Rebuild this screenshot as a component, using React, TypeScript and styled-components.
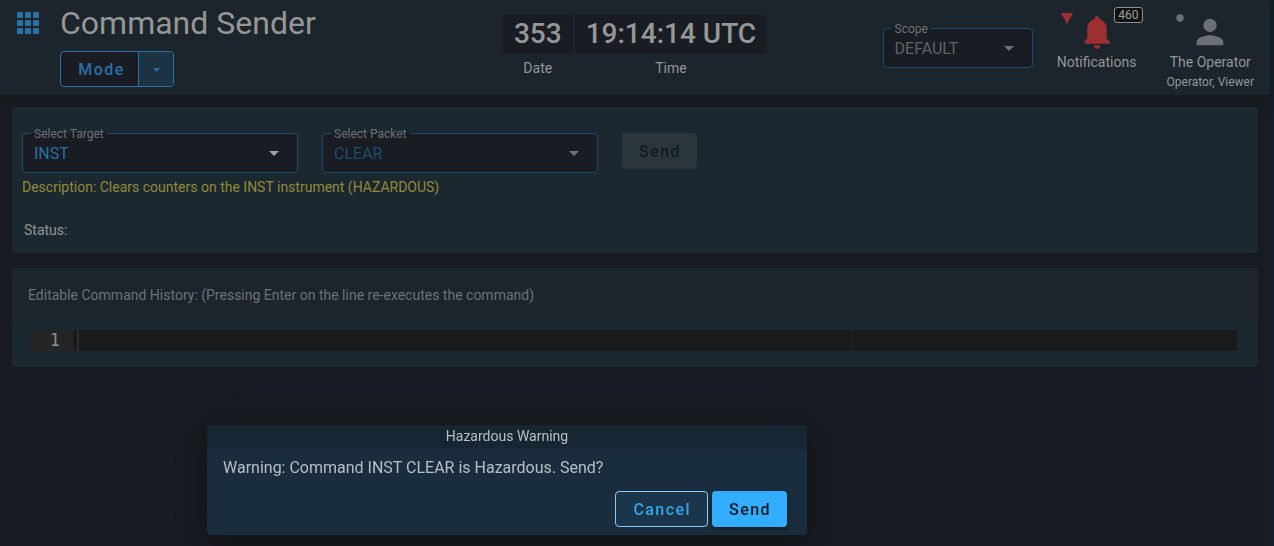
import React from 'react';
import styled, { createGlobalStyle, css } from 'styled-components';

const color = {
  page: '#191c24',
  bar: '#1b252b',
  card: '#1c2830',
  field: '#191c23',
  line: '#1d4b6e',
  accent: '#2a70a3',
  text: '#949698',
  muted: '#6c7277',
};

const GlobalStyle = createGlobalStyle`
  *, *::before, *::after { box-sizing: border-box; }
  body {
    margin: 0;
    background: ${color.page};
    color: ${color.text};
    font: 14px/20px Roboto, sans-serif;
  }
  button, select, input { font-family: inherit; }
`;

const Page = styled.div`
  min-height: 100vh;
  border-right: 4px solid #10202c;
`;

const TopBar = styled.header`
  display: grid;
  grid-template-columns: 1fr auto 1fr;
  min-height: 95px;
  background: ${color.bar};
  box-shadow: 0 4px 10px rgba(21, 24, 22, 0.9);
`;

const Brand = styled.div`
  display: flex;
  align-items: flex-start;
  gap: 21px;
  padding-left: 17px;
`;

const MenuButton = styled.button`
  display: flex;
  margin: 0;
  padding: 12px 0 0;
  border: 0;
  background: none;
  color: ${color.accent};
`;

const Title = styled.h1`
  margin: 3px 0 8px;
  color: #959696;
  font-size: 32px;
  font-weight: 400;
  line-height: 40px;
`;

const SplitButton = styled.div`
  display: inline-flex;
  height: 36px;
  border: 1px solid ${color.accent};
  border-radius: 4px;
  background: ${color.field};
  overflow: hidden;
`;

const buttonText = css`
  font-size: 16px;
  font-weight: 500;
  line-height: 20px;
  letter-spacing: 0.09em;
`;

const SplitMain = styled.button`
  ${buttonText}
  width: 77px;
  padding: 2px 0 0 4px;
  border: 0;
  background: none;
  color: ${color.accent};
`;

const SplitToggle = styled.button`
  display: flex;
  align-items: center;
  justify-content: center;
  width: 35px;
  padding: 2px 0 0;
  border: 0;
  border-left: 1px solid ${color.accent};
  background: #1b3343;
  color: ${color.accent};
`;

const Clock = styled.div`
  display: flex;
  gap: 2px;
  padding-top: 15px;
`;

const ClockPart = styled.div`
  text-align: center;
`;

const ClockValue = styled.div`
  margin-bottom: 5px;
  padding: 0 11px;
  background: ${color.field};
  color: #969798;
  font-size: 28px;
  font-weight: 500;
  line-height: 38px;
`;

const Tools = styled.div`
  display: flex;
  align-items: flex-start;
  justify-content: flex-end;
  gap: 24px;
  padding-right: 16px;
`;

const ScopeSlot = styled.div`
  padding-top: 28px;
`;

const Monitors = styled.div`
  display: flex;
  gap: 30px;
`;

const FieldBox = styled.div<{ $width: number }>`
  position: relative;
  width: ${(p) => p.$width}px;
  height: 40px;
  border: 1px solid ${color.line};
  border-radius: 4px;
  background: ${color.field};
`;

const FieldLabel = styled.label`
  position: absolute;
  top: -9px;
  left: 8px;
  padding: 0 3px;
  background: linear-gradient(${color.field}, ${color.field}) 0 8px / 100% 1px no-repeat;
  color: ${color.muted};
  font-size: 12px;
  line-height: 18px;
`;

const FieldSelect = styled.select<{ $tone: string }>`
  width: 100%;
  height: 100%;
  padding: 0 36px 0 11px;
  border: 0;
  appearance: none;
  background: none;
  color: ${(p) => p.$tone};
  font-size: 16px;
  opacity: 1;
`;

const FieldArrow = styled.svg`
  position: absolute;
  top: 17px;
  right: 18px;
  pointer-events: none;
`;

const Monitor = styled.div`
  display: flex;
  flex-direction: column;
  align-items: center;
  font-size: 14px;
`;

const MonitorIcon = styled.div`
  position: relative;
  display: flex;
  justify-content: center;
  height: 52px;
  width: 80px;
`;

const Bell = styled.svg`
  margin-top: 16px;
`;

const Person = styled.svg`
  margin-top: 12px;
`;

const Indicator = styled.svg`
  position: absolute;
  top: 12px;
  left: 4px;
`;

const Badge = styled.span`
  position: absolute;
  top: 7px;
  right: -6px;
  padding: 0 3px;
  border: 1px solid #8c8d8e;
  border-radius: 3px;
  background: #111212;
  color: #a0a1a1;
  font-size: 12px;
  line-height: 14px;
`;

const Roles = styled.span`
  font-size: 12px;
`;

const Main = styled.main`
  display: flex;
  flex-direction: column;
  gap: 15px;
  padding: 12px;
`;

const Card = styled.section`
  border-radius: 4px;
  background: ${color.card};
  box-shadow: 0 2px 6px rgba(21, 25, 25, 0.9);
  overflow: hidden;
`;

const CommandForm = styled.form`
  padding: 26px 10px 13px;
`;

const FormRow = styled.div`
  display: flex;
  flex-wrap: wrap;
  gap: 24px;
`;

const Description = styled.p`
  margin: 4px 0 23px;
  color: #93893a;
`;

const Status = styled.p`
  margin: 0 2px;
`;

const looks = {
  off: css`
    border: 0;
    background: #2b363c;
    color: #14191d;
  `,
  outline: css`
    border: 1px solid #8ccaf8;
    background: #1b364a;
    color: #34a5ef;
  `,
  solid: css`
    border: 0;
    background: #33adff;
    color: #0b1824;
    box-shadow: 0 2px 4px rgba(0, 0, 0, 0.4);
  `,
};

const Button = styled.button<{ $look: keyof typeof looks }>`
  ${buttonText}
  height: 36px;
  padding: 1px 16px 0 17px;
  border-radius: 4px;
  ${(p) => looks[p.$look]}
`;

const HistoryTitle = styled.h2`
  margin: 0;
  padding: 17px 16px;
  background: ${color.bar};
  color: ${color.muted};
  font-size: 14px;
  font-weight: 400;
  line-height: 20px;
`;

const Editor = styled.div`
  position: relative;
  display: flex;
  height: 21px;
  margin: 8px 21px 16px 18px;
  background: #1a1a1a;
  font: 17px/21px 'DejaVu Sans Mono', monospace;
`;

const Gutter = styled.div`
  width: 43px;
  padding-right: 13px;
  background: #242526;
  color: #8d8f8e;
  text-align: right;
`;

const EditorLine = styled.input`
  flex: 1;
  min-width: 0;
  margin-left: 4px;
  padding: 0;
  border: 0;
  border-left: 2px solid #2c2c2c;
  border-radius: 0;
  background: none;
  color: ${color.text};
  font-size: 17px;
  outline: none;
`;

const PrintMargin = styled.div`
  position: absolute;
  top: 0;
  bottom: 0;
  left: 821px;
  width: 1px;
  background: #232323;
`;

const Overlay = styled.div`
  position: fixed;
  inset: 0;
  display: flex;
  align-items: flex-end;
  padding: 0 0 11px 207px;
`;

const Dialog = styled.div`
  width: 600px;
  border-radius: 4px;
  background: #192d3e;
  box-shadow: 0 8px 40px 8px rgba(17, 20, 20, 0.85);
  color: #babfc3;
  overflow: hidden;
`;

const DialogTitle = styled.h2`
  margin: 0;
  padding-bottom: 2px;
  background: #162633;
  font-size: 14px;
  font-weight: 400;
  line-height: 22px;
  text-align: center;
`;

const DialogText = styled.p`
  margin: 9px 16px 13px;
  font-size: 16px;
  line-height: 20px;
`;

const DialogActions = styled.div`
  display: flex;
  justify-content: flex-end;
  gap: 4px;
  padding: 0 20px 8px;
`;

type FieldProps = {
  id: string;
  label: string;
  value: string;
  width: number;
  tone: string;
  arrow: string;
  disabled?: boolean;
};

function SelectField({ id, label, value, width, tone, arrow, disabled }: FieldProps) {
  return (
    <FieldBox $width={width}>
      <FieldSelect id={id} $tone={tone} defaultValue={value} disabled={disabled}>
        <option>{value}</option>
      </FieldSelect>
      <FieldLabel htmlFor={id}>{label}</FieldLabel>
      <FieldArrow width="10" height="5" viewBox="0 0 10 5">
        <path d="M0 0h10L5 5z" fill={arrow} />
      </FieldArrow>
    </FieldBox>
  );
}

const cells = [0, 8, 16];

export default function App() {
  return (
    <Page>
      <GlobalStyle />
      <TopBar>
        <Brand>
          <MenuButton aria-label="Applications">
            <svg width="22" height="22" viewBox="0 0 22 22" fill="currentColor">
              {cells.map((y) => cells.map((x) => <rect key={`${x}-${y}`} x={x} y={y} width="6" height="6" rx="0.5" />))}
            </svg>
          </MenuButton>
          <div>
            <Title>Command Sender</Title>
            <SplitButton>
              <SplitMain>Mode</SplitMain>
              <SplitToggle aria-label="Mode options">
                <svg width="7" height="4" viewBox="0 0 7 4">
                  <path d="M0 0h7L3.5 4z" fill="currentColor" />
                </svg>
              </SplitToggle>
            </SplitButton>
          </div>
        </Brand>
        <Clock>
          <ClockPart>
            <ClockValue>353</ClockValue>
            Date
          </ClockPart>
          <ClockPart>
            <ClockValue>19:14:14 UTC</ClockValue>
            Time
          </ClockPart>
        </Clock>
        <Tools>
          <ScopeSlot>
            <SelectField id="scope" label="Scope" value="DEFAULT" width={150} tone="#5f6366" arrow="#707375" />
          </ScopeSlot>
          <Monitors>
            <Monitor>
              <MonitorIcon>
                <Indicator width="12" height="12" viewBox="0 0 12 12">
                  <path d="M0 1h12L6 12z" fill="#9b2f32" />
                </Indicator>
                <Bell width="26" height="33" viewBox="0 0 26 33">
                  <path
                    fill="#9b2f32"
                    d="M13 0C11.3 0 10.8 1.3 10.6 3C6.3 4.3 3.3 8 3.3 13V22.5L.9 25C0 26 0 27.7 1.6 27.7H24.4C26 27.7 26 26 25.1 25L22.7 22.5V13C22.7 8 19.7 4.3 15.4 3C15.2 1.3 14.7 0 13 0ZM9.8 29.3H16.2C16 31.5 14.7 33 13 33S10 31.5 9.8 29.3Z"
                  />
                </Bell>
                <Badge>460</Badge>
              </MonitorIcon>
              Notifications
            </Monitor>
            <Monitor>
              <MonitorIcon>
                <Indicator width="12" height="12" viewBox="0 0 12 12">
                  <circle cx="6" cy="6" r="3.7" fill="#6b6f78" />
                </Indicator>
                <Person width="40" height="40" viewBox="0 0 24 24">
                  <path
                    fill="#6b6f78"
                    d="M12 12c2.21 0 4-1.79 4-4s-1.79-4-4-4-4 1.79-4 4 1.79 4 4 4zm0 2c-2.67 0-8 1.34-8 4v2h16v-2c0-2.66-5.33-4-8-4z"
                  />
                </Person>
              </MonitorIcon>
              The Operator
              <Roles>Operator, Viewer</Roles>
            </Monitor>
          </Monitors>
        </Tools>
      </TopBar>
      <Main>
        <Card>
          <CommandForm onSubmit={(e: React.FormEvent) => e.preventDefault()}>
            <FormRow>
              <SelectField id="target" label="Select Target" value="INST" width={276} tone={color.accent} arrow="#a0a2a4" />
              <SelectField id="packet" label="Select Packet" value="CLEAR" width={276} tone="#1f4c6b" arrow="#707375" />
              <Button $look="off" disabled>
                Send
              </Button>
            </FormRow>
            <Description>Description: Clears counters on the INST instrument (HAZARDOUS)</Description>
            <Status>Status:</Status>
          </CommandForm>
        </Card>
        <Card>
          <HistoryTitle>Editable Command History: (Pressing Enter on the line re-executes the command)</HistoryTitle>
          <Editor>
            <Gutter>1</Gutter>
            <EditorLine aria-label="Command history line 1" />
            <PrintMargin />
          </Editor>
        </Card>
      </Main>
      <Overlay>
        <Dialog role="dialog" aria-labelledby="dialog-title">
          <DialogTitle id="dialog-title">Hazardous Warning</DialogTitle>
          <DialogText>Warning: Command INST CLEAR is Hazardous. Send?</DialogText>
          <DialogActions>
            <Button $look="outline">Cancel</Button>
            <Button $look="solid">Send</Button>
          </DialogActions>
        </Dialog>
      </Overlay>
    </Page>
  );
}
